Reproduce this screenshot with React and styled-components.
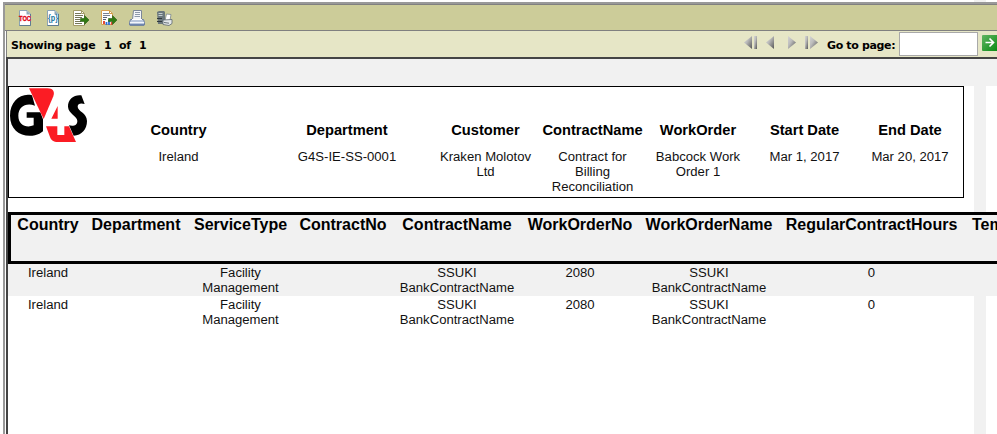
import React from "react";
import styled, { createGlobalStyle } from "styled-components";

const Global = createGlobalStyle`
  *{box-sizing:border-box}
  body{margin:0;background:#fff;overflow:hidden;font-family:"Liberation Sans",Arial,sans-serif;color:#000}
`;
const Window = styled.div`
  width:997px;height:434px;overflow:hidden;display:flex;flex-direction:column;
`;
const TopEdge = styled.div`
  height:2px;margin-left:974px;width:12px;background:#f1f1f1;
`;
const Viewer = styled.main`
  margin-left:3px;height:432px;border-left:2px solid #999;border-top:2px solid #999;
`;
const Toolbar = styled.div`
  height:27px;background:#cc9;border-top:1px solid #808080;border-bottom:1px solid #808080;
  padding:5px 0 0 12px;display:flex;gap:12px;
`;
const Inner = styled.div`margin-left:1px;`;
const NavBar = styled.div`
  height:26px;background:#e6e6c6;border-left:1px solid #808080;display:flex;align-items:flex-start;
  font:bold 11px/16px "DejaVu Sans",Verdana,sans-serif;padding-left:4px;
  > *{flex:none}
`;
const PageInfo = styled.div`
  width:732px;padding-top:7px;display:flex;
`;
const Word = styled.span`width:${p => p.$w}px;white-space:nowrap;letter-spacing:-.25px;`;
const Arrows = styled.div`width:84px;padding-top:5px;display:flex;`;
const GoInput = styled.input`
  width:79px;height:24px;margin:1px 4px 0 0;border:1px solid #a9a9a9;background:#fff;padding:0;outline:none;
`;
const GoLabel = styled.label`width:72px;padding-top:7px;white-space:nowrap;letter-spacing:-.35px;`;
const GoButton = styled.button`
  width:16px;height:16px;padding:0;border:0;margin-top:4px;background:none;display:block;
  svg{display:block}
`;
const Doc = styled.div`
  height:377px;border-left:2px solid #444;border-top:2px solid #444;background:#f1f1f1;padding-top:27px;
`;
const Sheets = styled.div`
  height:348px;background:linear-gradient(90deg,#fff 966px,#f1f1f1 966px,#f1f1f1 978px,#fff 978px);
`;
const Summary = styled.section`
  width:956px;height:112px;border:1px solid #000;display:grid;
  grid-template-columns:88px 163px 174px 103px 111px 100px 113px 98px;
`;
const Logo = styled.svg`width:80px;height:56px;display:block;`;
const Field = styled.div`text-align:center;padding-top:34px;white-space:nowrap;`;
const FieldName = styled.div`font:bold 14.67px/18px "Liberation Sans",Arial,sans-serif;`;
const FieldValue = styled.div`font-size:13.12px;line-height:15px;margin-top:10px;color:#111;`;
const columns = "74px 102px 107px 98px 130px 116px 142px 183px 120px";
const Table = styled.section`margin-top:14px;width:1090px;`;
const HeadRow = styled.div`
  height:52px;border:3px solid #000;background:#f1f1f1;display:grid;grid-template-columns:${columns};
`;
const HeadCell = styled.div`
  font:bold 16px/18px "Liberation Sans",Arial,sans-serif;text-align:${p => p.$left ? "left" : "center"};
  padding:1px 0 0 ${p => p.$left ? 9 : 0}px;white-space:nowrap;
`;
const Row = styled.div`
  height:32px;padding:1px 0 0 3px;background:${p => p.$shade ? "#f1f1f1" : "transparent"};
  display:grid;grid-template-columns:${columns};
`;
const Cell = styled.div`font-size:13.12px;line-height:15px;text-align:center;color:#111;white-space:nowrap;`;

const Icon = styled.svg`width:16px;height:16px;display:block;flex:none;`;
const Sheet = () => (
  <>
    <path d="M2.500.5h7.500l3.500 3.500v11.500h-11z" fill="#fff" stroke="#8ba3b5" />
    <path d="M9.500.5v4h4z" fill="#8fa9ba" />
    <path d="M13.500 4v11.500h-11" fill="none" stroke="#5f7c91" />
  </>
);
const GreenArrow = () => <path d="M7.500 8.500h4V5.500L16 10l-4.500 4.500v-3h-4z" fill="#2f7a12" stroke="#285a12" strokeWidth=".6" />;
const TocIcon = () => (
  <Icon viewBox="0 0 16 16"><Sheet />
    <text x="2" y="11" textLength="12" lengthAdjust="spacingAndGlyphs" fontFamily="Liberation Sans" fontWeight="bold" fontSize="7.500" fill="#e00010" stroke="#e00010" strokeWidth=".3">TOC</text>
  </Icon>
);
const ParamIcon = () => (
  <Icon viewBox="0 0 16 16"><Sheet />
    <text x="3" y="10.800" textLength="10" lengthAdjust="spacingAndGlyphs" fontFamily="Liberation Sans" fontWeight="bold" fontSize="9" fill="#1573a0">{"{p}"}</text>
  </Icon>
);
const ExportDataIcon = () => (
  <Icon viewBox="0 0 16 16">
    <path d="M.5.5h8l3 3v12H.5z" fill="#fff" stroke="#a29b68" /><path d="M8.500.5v3h3" fill="none" stroke="#a29b68" />
    <path d="M2 3.500h6M2 5.500h8M2 7.500h7M2 9.500h5M2 11.500h6M2 13.500h7" stroke="#77775a" />
    <GreenArrow />
  </Icon>
);
const ExportReportIcon = () => (
  <Icon viewBox="0 0 16 16">
    <path d="M.5.5h8l3 3v11H.5z" fill="#fff" stroke="#dba150" /><path d="M8.500.5v3h3" fill="none" stroke="#cf9a48" />
    <path d="M2 3.500h6M2 5.500h7" stroke="#7a8094" /><path d="M2 7.500h4M2 9.500h3" stroke="#59617a" />
    <path d="M3 11v3" stroke="#e04b3a" strokeWidth="2" /><path d="M5.500 12v3M8 10v5" stroke="#2d70d8" strokeWidth="1.800" /><path d="M10.500 12v3" stroke="#e04b3a" strokeWidth="1.500" />
    <GreenArrow />
  </Icon>
);
const PrintIcon = () => (
  <Icon viewBox="0 0 16 16">
    <path d="M4.500.5h8v9h-9z" fill="#f4f6f9" stroke="#7c8798" /><path d="M6 2.500h5M6 4.500h5M5.500 6.500h5.500" stroke="#8d99aa" />
    <path d="M1.500 9.500h13l1 3v2.500H.5v-2.500z" fill="#b8c6dc" stroke="#6e80a2" />
    <path d="M3 9.500h10" stroke="#fff" /><path d="M1 12.500h14" stroke="#f2f6fc" /><path d="M1 15h14" stroke="#4b68a0" />
  </Icon>
);
const ServerPrintIcon = () => (
  <Icon viewBox="0 0 16 16">
    <path d="M0 2l2-1h5l1 1v12H1z" fill="#6a777c" /><path d="M1.500 3.500h4M1.500 5.500h4" stroke="#c4ced1" />
    <path d="M0 8.500h5M0 11.500h5" stroke="#30383c" /><path d="M9.500 4l4.500.5-1 6H8z" fill="#fff" stroke="#7b868c" strokeWidth=".8" />
    <path d="M6 10l9-.5v4l-3 2-6-1z" fill="#e4e8ea" stroke="#5b666e" strokeWidth=".8" /><path d="M7 12.500l5 .7" stroke="#667078" />
  </Icon>
);
const Nav = styled.svg`width:78px;height:16px;display:block;`;

const fields = [
  ["Country", ["Ireland"]], ["Department", ["G4S-IE-SS-0001"]], ["Customer", ["Kraken Molotov", "Ltd"]],
  ["ContractName", ["Contract for", "Billing", "Reconciliation"]], ["WorkOrder", ["Babcock Work", "Order 1"]],
  ["Start Date", ["Mar 1, 2017"]], ["End Date", ["Mar 20, 2017"]],
];
const heads = ["Country", "Department", "ServiceType", "ContractNo", "ContractName", "WorkOrderNo", "WorkOrderName", "RegularContractHours", "Tem"];
const record = [["Ireland"], [], ["Facility", "Management"], [], ["SSUKI", "BankContractName"], ["2080"], ["SSUKI", "BankContractName"], ["0"], []];
const Lines = ({ items }) => items.map(t => <div key={t}>{t}</div>);
const arrowShapes = ["M9 0v13L1 6.500z", "M11 0h3v13h-3z", "M31 0v13l-8-6.500z", "M45 0v13l8-6.500z", "M62 0h3v13h-3z", "M67 0v13l8-6.500z"];

export default function App() {
  return (
    <Window>
      <Global />
      <TopEdge />
      <Viewer>
        <Toolbar><TocIcon /><ParamIcon /><ExportDataIcon /><ExportReportIcon /><PrintIcon /><ServerPrintIcon /></Toolbar>
        <Inner>
          <NavBar>
            <PageInfo><Word $w={93}>Showing page</Word><Word $w={15}>1</Word><Word $w={20}>of</Word><Word $w={10}>1</Word></PageInfo>
            <Arrows>
              <Nav viewBox="0 0 78 16">
                <defs>
                  <linearGradient id="metal" x1="0" y1="0" x2="1" y2="1">
                    <stop stopColor="#d4d4d4" /><stop offset=".4" stopColor="#bcbcbc" /><stop offset="1" stopColor="#555" />
                  </linearGradient>
                </defs>
                {arrowShapes.map(d => <path key={d} d={d} fill="url(#metal)" />)}
              </Nav>
            </Arrows>
            <GoLabel>Go to page:</GoLabel>
            <GoInput />
            <GoButton>
              <svg width="16" height="16" viewBox="0 0 16 16">
                <defs><linearGradient id="go" x1="0" y1="0" x2="1" y2="1"><stop stopColor="#62b562" /><stop offset="1" stopColor="#078a12" /></linearGradient></defs>
                <rect width="16" height="16" rx="1" fill="url(#go)" />
                <path d="M3.500 7.500h7.500M7.500 3.500l4 4-4 4" fill="none" stroke="#fff" strokeWidth="1.700" />
              </svg>
            </GoButton>
          </NavBar>
          <Doc>
            <Sheets>
              <Summary>
                <Logo viewBox="27 27 240 168">
                  <path d="M96 52C62 44 30 70 30 113c0 45 36 67 75 59 10-2 17-6 24-12v-36l-8-21H80v16h21v23c-22 9-46-1-46-29 0-27 23-40 50-30z" />
                  <path fill="#fb1c24" d="M87 31h55c17 0 23 10 18 24l-29 68z" />
                  <path fill="#fb1c24" d="M173 84v38h-19zM138 145h34v26h21v-26h14l21 47h-54c-14 0-20-5-24-15z" />
                  <path d="M254 78l-10-26c-20-3-41 10-40 34 1 22 28 27 28 43 0 13-12 17-25 13l14 31c24-1 40-19 40-44 0-25-28-29-28-43 0-9 9-12 21-8z" />
                </Logo>
                {fields.map(([name, v]) => <Field key={name}><FieldName>{name}</FieldName><FieldValue><Lines items={v} /></FieldValue></Field>)}
              </Summary>
              <Table>
                <HeadRow>{heads.map((h, i) => <HeadCell key={h} $left={i === 8}>{h}</HeadCell>)}</HeadRow>
                {[true, false].map(s => <Row key={String(s)} $shade={s}>{record.map((c, i) => <Cell key={i}><Lines items={c} /></Cell>)}</Row>)}
              </Table>
            </Sheets>
          </Doc>
        </Inner>
      </Viewer>
    </Window>
  );
}
